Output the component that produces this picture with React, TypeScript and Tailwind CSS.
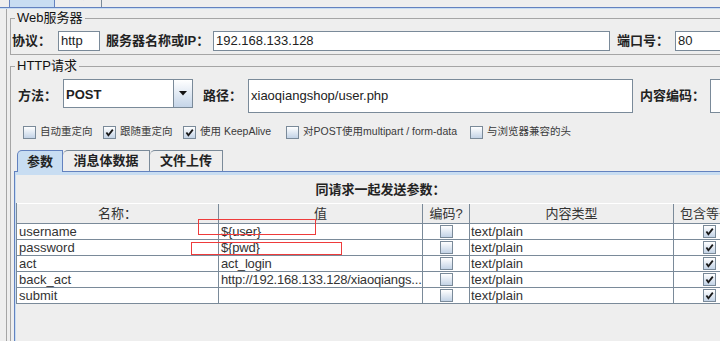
import React from 'react';

const rows = [
  { name: 'username', value: '${user}' },
  { name: 'password', value: '${pwd}' },
  { name: 'act', value: 'act_login' },
  { name: 'back_act', value: 'http://192.168.133.128/xiaoqiangs...' },
  { name: 'submit', value: '' },
];

function Check({ on }: { on?: boolean }) {
  return (
    <span className="flex h-[13px] w-[13px] shrink-0 items-center justify-center border border-[#7a8a99] bg-linear-to-b from-white to-[#c3d3e6]">
      {on && (
        <svg width="9" height="9" viewBox="0 0 9 9">
          <path d="M1.4 4.4 L3.4 7.2 L7.8 1.6" stroke="#1a1a1a" strokeWidth="1.8" fill="none" />
        </svg>
      )}
    </span>
  );
}

function Opt({ label, on, w }: { label: string; on?: boolean; w: string }) {
  return (
    <div className={`flex items-center gap-[4px] ${w}`}>
      <Check on={on} />
      <span className="whitespace-nowrap text-[10.5px] text-[#3a3a3a]">{label}</span>
    </div>
  );
}

export default function App() {
  return (
    <div className="relative h-[341px] w-[720px] overflow-hidden bg-[#eeeeee] font-['Liberation_Sans','Noto_Sans_CJK_SC',sans-serif] text-[#222]">
      <div className="w-[760px]">
        {/* outer tabs, scrolled mostly out of view */}
        <div className="flex h-[7px] items-end overflow-hidden pl-[9px]">
          <div className="flex h-[28px] w-[46px] shrink-0 items-center justify-center rounded-tl-[5px] border border-b-0 border-[#6382bf] bg-[#c8ddf2] text-[13px] font-bold">基本</div>
          <div className="flex h-[28px] w-[47px] shrink-0 items-center justify-center rounded-tl-[5px] border border-b-0 border-l-0 border-[#7a8a99] text-[13px] font-bold">高级</div>
        </div>
        <div className="h-px bg-[#6382bf]" />
        <div className="h-px bg-[#c8ddf2]" />

        <div className="ml-[6px] border-l border-[#a5a5a5] pl-[3px] pt-px">
          {/* Web server */}
          <fieldset className="border border-[#a5a5a5] pb-[3px] pl-px pt-[5px]">
            <legend className="ml-[3px] px-[2px] text-[13px] leading-[16px] text-[#111]">Web服务器</legend>
            <div className="flex h-[20px] items-center text-[13px]">
              <span className="w-[46px] font-bold">协议：</span>
              <div className="flex h-[20px] w-[42px] items-center border border-[#7a8a99] bg-white pl-[2px]">http</div>
              <span className="ml-[6px] w-[107px] whitespace-nowrap font-bold">服务器名称或IP：</span>
              <div className="flex h-[20px] w-[397px] items-center border border-[#7a8a99] bg-white pl-[2px]">192.168.133.128</div>
              <span className="ml-[7px] w-[58px] font-bold">端口号：</span>
              <div className="flex h-[20px] w-[80px] items-center border border-[#7a8a99] bg-white pl-[2px]">80</div>
            </div>
          </fieldset>

          {/* HTTP request */}
          <fieldset className="mt-[3px] border border-[#a5a5a5] pl-px pt-[5px]">
            <legend className="ml-[3px] px-[2px] text-[13px] leading-[16px] text-[#111]">HTTP请求</legend>
            <div className="flex h-[34px] items-start text-[13px]">
              <span className="ml-[6px] w-[45px] self-center font-bold">方法：</span>
              <div className="flex h-[29px] w-[130px] border border-[#7a8a99] bg-white">
                <div className="flex flex-1 items-center pl-[2px] pt-[3px] font-bold">POST</div>
                <div className="flex w-[19px] items-center justify-center border-l border-[#7a8a99] bg-linear-to-b from-white to-[#c5d5e8]">
                  <svg width="8" height="5" viewBox="0 0 8 5">
                    <path d="M0 0 H8 L4 4.5 Z" fill="#111" />
                  </svg>
                </div>
              </div>
              <span className="ml-[10px] w-[45px] self-center font-bold">路径：</span>
              <div className="flex h-[34px] w-[385px] items-center border border-[#7a8a99] bg-white pl-[2px]">xiaoqiangshop/user.php</div>
              <span className="ml-[7px] w-[70px] self-center whitespace-nowrap font-bold">内容编码：</span>
              <div className="h-[34px] w-[60px] border border-[#7a8a99] bg-white" />
            </div>

            <div className="mt-[11px] flex h-[16px] items-center pl-[11px]">
              <Opt label="自动重定向" w="w-[80px]" />
              <Opt label="跟随重定向" on w="w-[80px]" />
              <Opt label="使用 KeepAlive" on w="w-[103px]" />
              <Opt label="对POST使用multipart / form-data" w="w-[184px]" />
              <Opt label="与浏览器兼容的头" w="w-[120px]" />
            </div>

            {/* inner tabs */}
            <div className="mt-[10px] ml-[2px]">
              <div className="flex h-[21px] items-start pl-[3px] text-[13px] font-bold">
                <div className="relative z-10 flex h-[22px] w-[46px] items-center justify-center rounded-tl-[5px] border border-b-0 border-[#6382bf] bg-[#c8ddf2]">参数</div>
                <div className="flex h-[21px] w-[87px] items-center justify-center rounded-tl-[5px] border border-b-0 border-l-0 border-[#7a8a99]">消息体数据</div>
                <div className="flex h-[21px] w-[73px] items-center justify-center rounded-tl-[5px] border border-b-0 border-l-0 border-[#7a8a99]">文件上传</div>
              </div>
              <div className="h-[200px] border-l border-t border-[#6382bf]">
                <div className="h-full border-l border-t-[3px] border-[#c8ddf2]">
                  <div className="mt-[7px] h-[16px] w-[729px] text-center text-[13px] font-bold leading-[16px]">同请求一起发送参数：</div>
                  <div className="mt-[5px] w-[729px] border-l border-[#7a8a99] text-[13px] text-[#333]">
                    <div className="flex h-[21px] border-b border-t border-b-[#7a8a99] border-t-white">
                      <div className="flex w-[202px] items-center justify-center border-r border-[#7a8a99]">名称：</div>
                      <div className="flex w-[204px] items-center justify-center border-r border-[#7a8a99]">值</div>
                      <div className="flex w-[47px] items-center justify-center border-r border-[#7a8a99]">编码?</div>
                      <div className="flex w-[204px] items-center justify-center border-r border-[#7a8a99]">内容类型</div>
                      <div className="flex w-[71px] items-center justify-center whitespace-nowrap">包含等于?</div>
                    </div>
                    {rows.map((r) => (
                      <div key={r.name} className="flex h-[16px] border-b border-[#7a8a99] bg-white leading-[15px]">
                        <div className="w-[202px] border-r border-[#7a8a99] pl-[2px]">{r.name}</div>
                        <div className="w-[204px] overflow-hidden whitespace-nowrap border-r border-[#7a8a99] pl-[2px] tracking-[-0.17px]">{r.value}</div>
                        <div className="flex w-[47px] items-center justify-center border-r border-[#7a8a99]">
                          <Check />
                        </div>
                        <div className="w-[204px] border-r border-[#7a8a99] pl-px">text/plain</div>
                        <div className="flex w-[71px] items-center justify-center">
                          <Check on />
                        </div>
                      </div>
                    ))}
                  </div>
                </div>
              </div>
            </div>
          </fieldset>
        </div>
      </div>

      {/* red annotation boxes */}
      <div className="absolute left-[198px] top-[219px] h-[16px] w-[118px] border border-[#ee3b3b]" />
      <div className="absolute left-[191px] top-[242px] h-[13px] w-[151px] border border-[#ee3b3b]" />
    </div>
  );
}
